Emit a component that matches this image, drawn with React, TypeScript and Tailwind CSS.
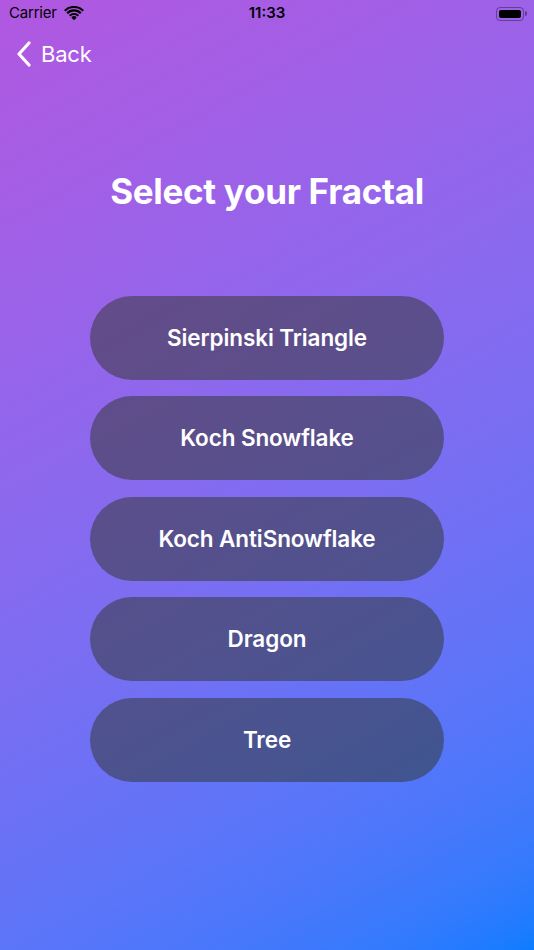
const fractals = ['Sierpinski Triangle', 'Koch Snowflake', 'Koch AntiSnowflake', 'Dragon', 'Tree'];

function Wifi() {
  return (
    <svg width="20" height="15" viewBox="0 0 20 15" className="ml-[7px]">
      <path d="M10 14.2 L7.3 11.4 A3.9 3.9 0 0 1 12.7 11.4 Z" fill="#000" />
      <path d="M4.9 9 A7.3 7.3 0 0 1 15.1 9 L13.6 10.5 A5.2 5.2 0 0 0 6.4 10.5 Z" fill="#000" />
      <path d="M2.4 6.5 A10.8 10.8 0 0 1 17.6 6.5 L16.1 8 A8.7 8.7 0 0 0 3.9 8 Z" fill="#000" />
      <path d="M0 4 A14.2 14.2 0 0 1 20 4 L18.5 5.5 A12.1 12.1 0 0 0 1.5 5.5 Z" fill="#000" />
    </svg>
  );
}

function Battery() {
  return (
    <div className="flex items-center">
      <div className="h-[14px] w-[28px] rounded-[4px] border border-black/35 p-[2px]">
        <div className="h-full w-full rounded-[2px] bg-black" />
      </div>
      <div className="ml-[1px] h-[5px] w-[2px] rounded-r-sm bg-black/40" />
    </div>
  );
}

export default function App() {
  return (
    <div
      className="flex min-h-[950px] w-full flex-col bg-[linear-gradient(151deg_in_srgb-linear,#b157e0,#0a7cff)] text-white"
      style={{ fontFamily: 'Inter, "Open Sans", sans-serif' }}
    >
      <div className="relative flex h-[27px] items-center px-[9px] text-[15px] text-black">
        <div className="flex items-center">
          <span className="tracking-[-0.2px]">Carrier</span>
          <Wifi />
        </div>
        <span className="absolute left-1/2 -translate-x-1/2 font-semibold">11:33</span>
        <div className="ml-auto mr-[-2px]">
          <Battery />
        </div>
      </div>

      <div className="flex h-[54px] items-center pl-[16px]">
        <svg width="16" height="26" viewBox="0 0 16 26" className="mr-[9px]">
          <path d="M13 2 L3 13 L13 24" fill="none" stroke="#fff" strokeWidth="3.2" strokeLinecap="round" strokeLinejoin="round" />
        </svg>
        <span className="text-[22px] tracking-[-0.2px]">Back</span>
      </div>

      <h1 className="mt-[84px] text-center text-[35px] font-bold tracking-[-0.3px]">Select your Fractal</h1>

      <div className="mx-auto mt-[78px] flex w-[354px] flex-col gap-[16.5px]">
        {fractals.map((f) => (
          <button
            key={f}
            className="flex h-[84px] items-center justify-center rounded-full bg-[rgba(45,52,40,0.5)] text-[22.5px] font-semibold tracking-[-0.1px] text-white"
          >
            {f}
          </button>
        ))}
      </div>
    </div>
  );
}
